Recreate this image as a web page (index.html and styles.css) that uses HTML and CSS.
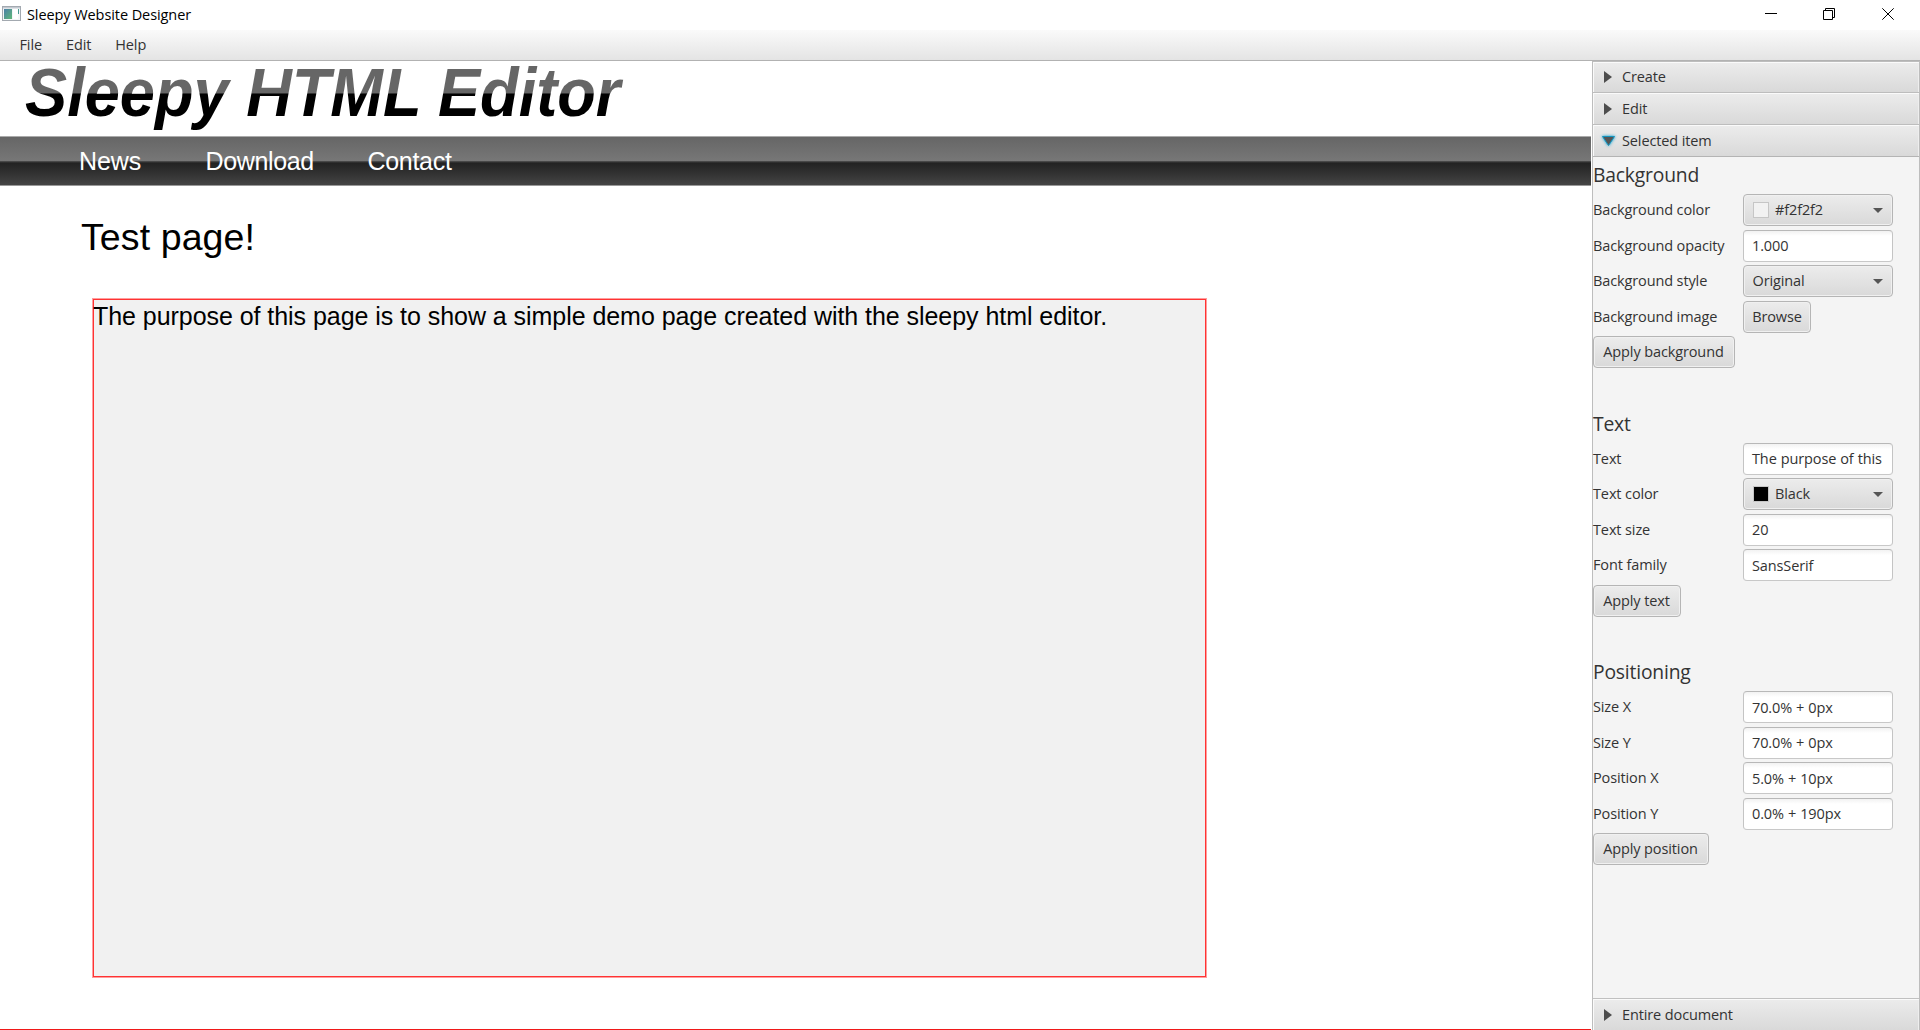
FILE: index.html
```html
<!DOCTYPE html>
<html lang="en">
<head>
<meta charset="utf-8">
<title>Sleepy Website Designer</title>
<link rel="stylesheet" href="styles.css">
</head>
<body>
<header class="titlebar">
  <svg class="app-icon" width="19" height="15" viewBox="0 0 19 15">
    <defs><linearGradient id="g" x1="0" y1="0" x2="1" y2="1"><stop offset="0" stop-color="#4a7fa8"/><stop offset="1" stop-color="#5fb878"/></linearGradient></defs>
    <rect x=".5" y=".5" width="18" height="14" fill="#f4f5f7" stroke="#a3a9b0"/>
    <rect x="1" y="1" width="17" height="1.4" fill="#c3c9d0"/>
    <rect x="2" y="3" width="8" height="10" fill="url(#g)"/>
    <rect x="11" y="3" width="5" height="10" fill="#fff"/>
    <rect x="16" y="3" width="1" height="5" fill="#4a9a94"/>
  </svg>
  <span class="title">Sleepy Website Designer</span>
  <div class="window-buttons">
    <svg width="12" height="12" viewBox="0 0 12 12"><path d="M0 5.500H12"/></svg>
    <svg width="12" height="12" viewBox="0 0 12 12"><path d="M.5 2.500H9.500V11.500H.5ZM2.500 2.500V.5H11.500V9.500H9.500"/></svg>
    <svg width="12" height="12" viewBox="0 0 12 12"><path d="M.3 .3L11.700 11.700M11.700 .3L.3 11.700"/></svg>
  </div>
</header>
<nav class="menubar"><span>File</span><span>Edit</span><span>Help</span></nav>
<div class="workspace">
  <main class="canvas">
    <div class="logo"><span>Sleepy HTML Editor</span></div>
    <div class="site-nav"><span class="news">News</span><span class="download">Download</span><span class="contact">Contact</span></div>
    <h1>Test page!</h1>
    <div class="selected-box"><p>The purpose of this page is to show a simple demo page created with the sleepy html editor.</p></div>
  </main>
  <aside class="inspector">
    <div class="pane-title first"><i class="arrow"></i>Create</div>
    <div class="pane-title"><i class="arrow"></i>Edit</div>
    <div class="pane-title open"><svg class="arrow-open" width="19" height="17" viewBox="0 0 19 17"><path d="M3.500 4.500H15.500L9.500 13.500Z"/></svg>Selected item</div>
    <div class="pane-body">
      <section>
        <h2>Background</h2>
        <div class="form">
          <label>Background color</label><div class="select"><b class="swatch light"></b>#f2f2f2<i class="caret"></i></div>
          <label>Background opacity</label><div class="input">1.000</div>
          <label>Background style</label><div class="select">Original<i class="caret"></i></div>
          <label>Background image</label><button class="browse">Browse</button>
          <button class="apply apply-background">Apply background</button>
        </div>
      </section>
      <section>
        <h2>Text</h2>
        <div class="form">
          <label>Text</label><div class="input">The purpose of this</div>
          <label>Text color</label><div class="select"><b class="swatch dark"></b>Black<i class="caret"></i></div>
          <label>Text size</label><div class="input">20</div>
          <label>Font family</label><div class="input">SansSerif</div>
          <button class="apply apply-text">Apply text</button>
        </div>
      </section>
      <section>
        <h2>Positioning</h2>
        <div class="form">
          <label>Size X</label><div class="input">70.0% + 0px</div>
          <label>Size Y</label><div class="input">70.0% + 0px</div>
          <label>Position X</label><div class="input">5.0% + 10px</div>
          <label>Position Y</label><div class="input">0.0% + 190px</div>
          <button class="apply apply-position">Apply position</button>
        </div>
      </section>
    </div>
    <div class="pane-title last"><i class="arrow"></i>Entire document</div>
  </aside>
</div>
</body>
</html>
```
FILE: styles.css
```css
* { box-sizing: border-box; }
body {
  margin: 0;
  height: 1030px;
  display: flex;
  flex-direction: column;
  overflow: hidden;
  background: #fff;
  color: #333;
  font: 14.5px/20px "Open Sans", sans-serif;
  letter-spacing: -0.12px;
  white-space: nowrap;
}
.titlebar { height: 30px; display: flex; align-items: center; padding: 0 26px 0 2px; color: #000; }
.app-icon { margin-top: -3px; }
.title { margin-left: 6px; letter-spacing: -0.08px; }
.window-buttons { margin-left: auto; display: flex; gap: 46px; margin-top: -2px; }
.window-buttons svg { fill: none; stroke: #000; stroke-width: 1; }
.window-buttons svg:last-child { margin-left: 1px; }
.menubar {
  height: 31px;
  display: flex;
  gap: 24px;
  padding: 5px 0 0 19.5px;
  border-bottom: 1px solid #b2b2b2;
  background: linear-gradient(#fafafa, #e4e4e4);
}
.workspace { flex: 1; display: flex; min-height: 0; }

.canvas {
  width: 1591px;
  margin-right: 1px;
  border-bottom: 1px solid #f01818;
  font-family: "Liberation Sans", Arial, sans-serif;
  letter-spacing: 0;
  color: #000;
}
.logo { height: 75px; padding-left: 24.5px; display: flex; align-items: flex-start; }
.logo span {
  flex: none;
  height: 75px;
  margin-top: -6px;
  padding-right: 8px;
  font: italic bold 68.5px/75px "Liberation Sans", Arial, sans-serif;
  transform: scaleX(.922);
  transform-origin: left;
  color: transparent;
  background: linear-gradient(#666 38px, #303030 38px, #303030 39px, #000 39px);
  background-clip: text;
  -webkit-background-clip: text;
}
.site-nav {
  height: 50px;
  display: flex;
  padding: 0 0 0 79px;
  font-size: 25px;
  line-height: 49px;
  color: #fff;
  border-top: 1px solid #aaa;
  border-bottom: 1px solid #999;
  background: linear-gradient(#666, #777 24px, #555 24px, #222 26px, #444);
}
.news { width: 126.5px; letter-spacing: -0.1px; }
.download { width: 162px; letter-spacing: -0.35px; }
.contact { letter-spacing: -0.3px; }
h1 { margin: 26px 0 0 81px; font-size: 37.5px; font-weight: normal; line-height: 50px; letter-spacing: 0.1px; }
.selected-box {
  width: 1113px;
  height: 678px;
  margin: 37px 0 0 93px;
  border: 1px solid #ff3333;
  box-shadow: 0 0 0 1px rgba(255, 40, 40, .45);
  background: #f1f1f1;
}
.selected-box p { margin: 1px 0 0 -1px; font-size: 25px; line-height: 31px; letter-spacing: -0.05px; }

.inspector {
  flex: 1;
  display: flex;
  flex-direction: column;
  border: solid #bdbdbd;
  border-width: 0 1px;
  background: #f4f4f4;
}
.pane-title {
  height: 32px;
  display: flex;
  align-items: center;
  padding-left: 11px;
  border-top: 1px solid #bdbdbd;
  background: linear-gradient(#ececec, #d9d9d9);
  box-shadow: inset 1px 1px #fafafa, inset -1px 0 #eee;
}
.pane-title.first { height: 31px; padding-bottom: 1px; }
.pane-title.open { height: 33px; border-bottom: 1px solid #b4b4b4; }
.pane-title.last { border-top-color: #c0c0c0; }
.arrow { border: solid transparent; border-width: 6px 0 6px 8px; border-left-color: #4d4d4d; margin-right: 10px; }
.arrow-open { margin: 0 4px 0 -5px; fill: #555; stroke: #1593bd; stroke-width: 1; filter: drop-shadow(0 0 1.5px #039ed3); }
.pane-body { flex: 1; display: flex; flex-direction: column; gap: 37.6px; }
h2 { margin: 0; height: 37px; font-size: 19.3px; font-weight: normal; line-height: 35.6px; letter-spacing: -0.18px; }
.form {
  display: grid;
  grid-template-columns: 150px 150px;
  grid-auto-rows: 32px;
  row-gap: 3.5px;
  align-items: center;
}
.select, .input, button {
  height: 32px;
  display: flex;
  align-items: center;
  padding: 0 9px 0 8.5px;
  border: 1px solid #b5b5b5;
  border-radius: 4px;
  font: inherit;
  color: #333;
  letter-spacing: inherit;
}
.select, button {
  background: linear-gradient(#ececec, #d9d9d9);
  box-shadow: inset 0 0 0 1px #f0f0f0;
}
button { justify-content: center; padding: 0 1px 0 0; }
.input { padding-top: 1.6px; padding-left: 8px; word-spacing: .4px; border-color: #b8b8b8 #c4c4c4 #c8c8c8; background: linear-gradient(#f2f2f2, #fff 5px); }
.browse { width: 68px; padding-right: 0; }
.apply { grid-column: 1 / 3; }
.apply-background { width: 142px; }
.apply-text { width: 88px; }
.apply-position { width: 116px; }
.swatch { width: 16px; height: 16px; margin: 0 6px 0 .5px; border: 1px solid #c6c6c6; background: #f2f2f2; }
.swatch.dark { background: #000; }
.caret { margin: 1px 0 0 auto; border: solid transparent; border-width: 5px 5px 0; border-top-color: #555; }
```
